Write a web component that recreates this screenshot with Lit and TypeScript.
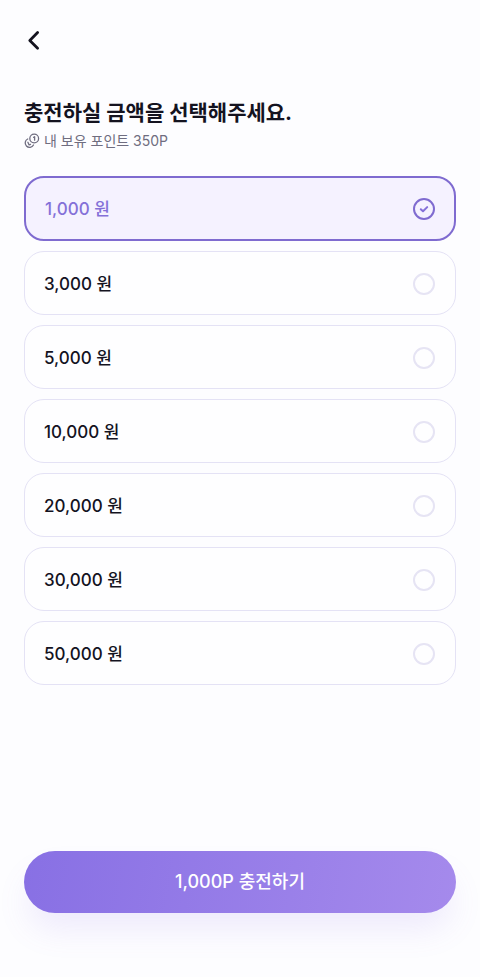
import { LitElement, html, css, svg } from "lit";
import { customElement, state } from "lit/decorators.js";

const AMOUNTS = [1000, 3000, 5000, 10000, 20000, 30000, 50000];

const format = (value: number) => value.toLocaleString("en-US");

const coin = svg`
  <g fill="none" stroke="currentColor" stroke-width="1.3" stroke-linecap="round" stroke-linejoin="round">
    <circle cx="10.2" cy="5.5" r="4.4" />
    <path d="M9.6 4.3l1-.6v3.5" />
    <path d="M3.7 6a4.4 4.4 0 1 0 5.8 6" />
    <path d="M3.9 9.3l1.2 2.6 1.4-.6" />
  </g>
`;

@customElement("app-root")
export class AppRoot extends LitElement {
  @state() private selected = 1000;

  static styles = css`
    :host {
      display: block;
      font-family: Inter, "Noto Sans CJK KR", sans-serif;
      color: #14131f;
      background: #fdfdff;
    }
    * {
      box-sizing: border-box;
    }
    .page {
      display: flex;
      flex-direction: column;
      min-height: 100vh;
      padding: 24px 24px 64px;
    }
    .back {
      display: flex;
      align-items: center;
      width: 32px;
      height: 32px;
      padding: 0;
      border: 0;
      background: none;
      color: inherit;
      cursor: pointer;
    }
    .title {
      margin: 41px 0 0;
      font-size: 21px;
      line-height: 32px;
      font-weight: 700;
    }
    .balance {
      display: flex;
      align-items: center;
      gap: 4px;
      margin: 0;
      font-size: 14px;
      line-height: 24px;
      color: #6f6d80;
    }
    .options {
      display: flex;
      flex-direction: column;
      gap: 10px;
      margin: 23px 0 48px;
      padding: 0;
      border: 0;
    }
    .option {
      display: flex;
      align-items: center;
      justify-content: space-between;
      height: 64px;
      padding: 1px 20px 0 19px;
      border: 1px solid #e4e2f5;
      border-radius: 20px;
      background: #fefeff;
      font-size: 17px;
      line-height: 24px;
      font-weight: 500;
      cursor: pointer;
    }
    .option.on {
      height: 65px;
      padding: 0 19px;
      border: 2px solid #7f6bd0;
      background: #f5f2ff;
      color: #8470d8;
    }
    .mark {
      display: grid;
      width: 22px;
      height: 22px;
    }
    .mark > * {
      grid-area: 1 / 1;
      width: 22px;
      height: 22px;
      margin: 0;
    }
    .radio {
      appearance: none;
      border: 2px solid #e6e4f4;
      border-radius: 50%;
      cursor: pointer;
    }
    .on .radio {
      border-color: #7f6bd0;
    }
    .check {
      pointer-events: none;
    }
    .submit {
      flex: none;
      height: 62px;
      margin-top: auto;
      padding: 0;
      border: 0;
      border-radius: 31px;
      background: linear-gradient(100deg, #8870e4, #a58aec);
      box-shadow: 0 20px 32px -4px rgba(136, 112, 228, 0.13);
      color: #fff;
      font: inherit;
      font-size: 18px;
      line-height: 24px;
      font-weight: 500;
      cursor: pointer;
    }
  `;

  render() {
    return html`
      <main class="page">
        <button class="back" type="button" aria-label="뒤로">
          <svg width="20" height="24" viewBox="0 0 20 24" fill="none" stroke="currentColor" stroke-width="2.8"
            stroke-linecap="round" stroke-linejoin="round" aria-hidden="true">
            <path d="M13.6 4.6L5.8 12.4l7.8 7.8" />
          </svg>
        </button>
        <h1 class="title">충전하실 금액을 선택해주세요.</h1>
        <p class="balance">
          <svg width="16" height="16" viewBox="0 0 16 16" aria-hidden="true">${coin}</svg>
          <span>내 보유 포인트 350P</span>
        </p>
        <fieldset class="options" aria-label="충전 금액">
          ${AMOUNTS.map((amount) => {
            const on = amount === this.selected;
            return html`
              <label class="option ${on ? "on" : ""}">
                <span>${format(amount)} 원</span>
                <span class="mark">
                  <input class="radio" type="radio" name="amount" .value=${String(amount)} .checked=${on}
                    @change=${() => (this.selected = amount)} />
                  ${on
                    ? html`<svg class="check" viewBox="0 0 22 22" fill="none" stroke="currentColor"
                        stroke-width="2" stroke-linecap="round" stroke-linejoin="round" aria-hidden="true">
                        <path d="M7.8 11.2l2.2 2.1 4.2-4.2" />
                      </svg>`
                    : null}
                </span>
              </label>
            `;
          })}
        </fieldset>
        <button class="submit" type="button">${format(this.selected)}P 충전하기</button>
      </main>
    `;
  }
}
